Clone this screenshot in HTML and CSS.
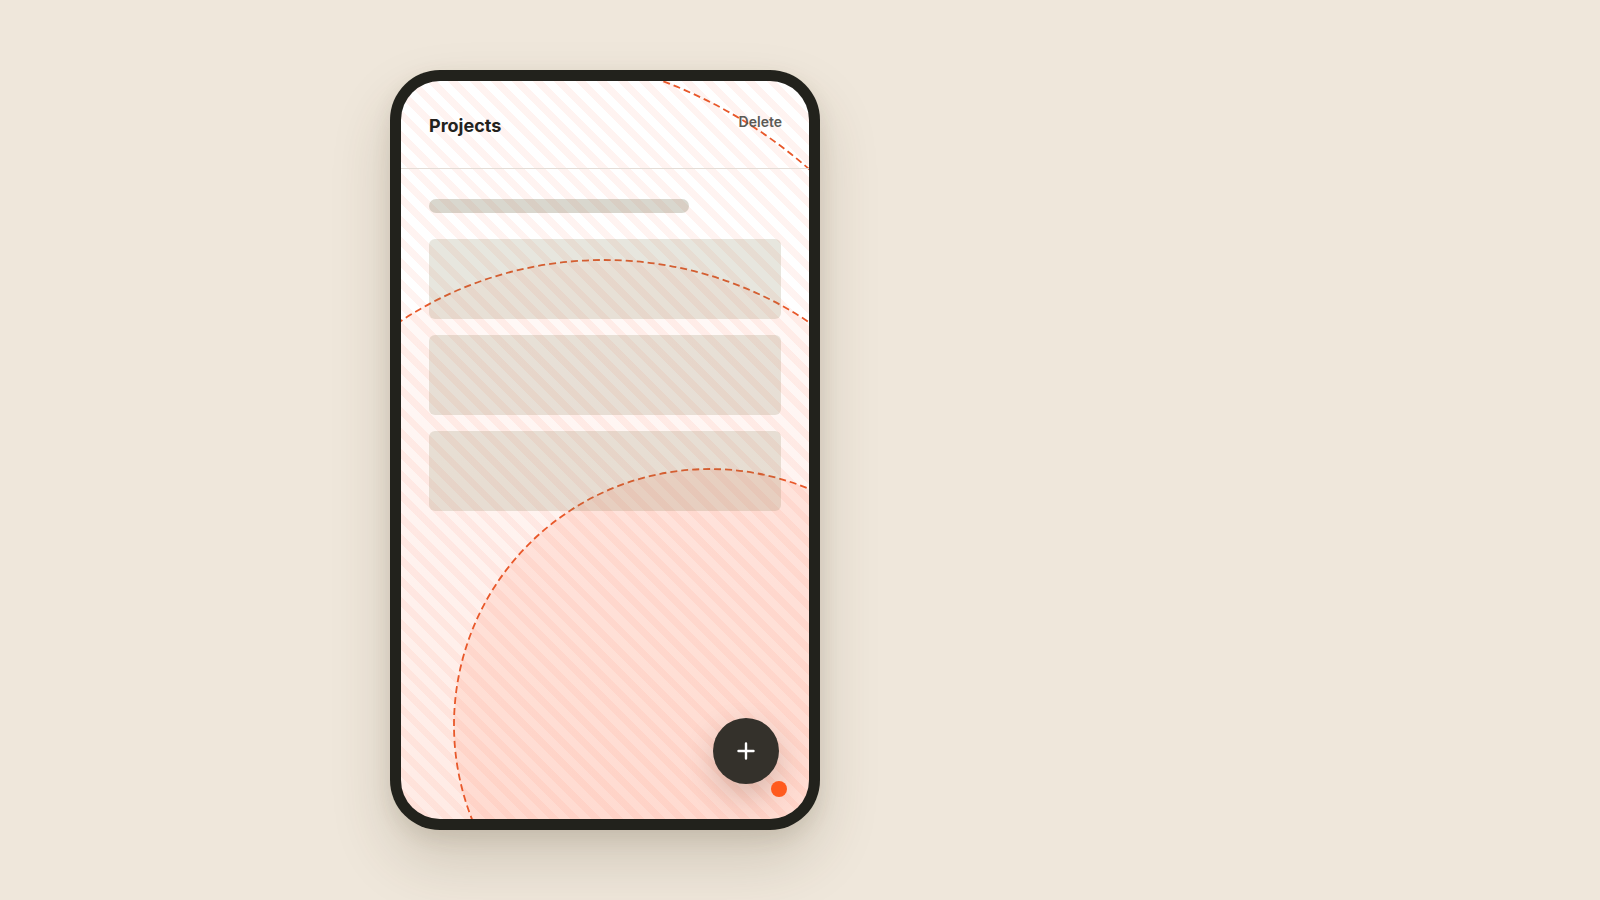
FILE: index.html
```html
<!DOCTYPE html>
<html lang="en">
<head>
<meta charset="utf-8">
<title>Projects</title>
<link rel="stylesheet" href="styles.css">
</head>
<body>
<main class="stage">
  <div class="phone">
    <div class="screen">
      <svg class="rings" width="408" height="738" viewBox="0 0 408 738" aria-hidden="true">
        <circle class="ring ring-outer" cx="92" cy="448" r="479"/>
        <circle class="ring ring-mid" cx="203" cy="548" r="369"/>
        <circle class="ring ring-inner" cx="309" cy="644" r="256"/>
      </svg>
      <header class="topbar">
        <h1 class="title">Projects</h1>
        <button class="delete">Delete</button>
      </header>
      <section class="content">
        <div class="skeleton-line"></div>
        <div class="skeleton-card"></div>
        <div class="skeleton-card"></div>
        <div class="skeleton-card"></div>
      </section>
      <button class="fab" aria-label="Add project">
        <svg width="20" height="20" viewBox="0 0 20 20"><path d="M10 2.5v15M2.5 10h15" stroke="#fff" stroke-width="2.4" stroke-linecap="round"/></svg>
      </button>
      <span class="touch-dot"></span>
    </div>
  </div>
</main>
</body>
</html>
```
FILE: styles.css
```css
* { box-sizing: border-box; }
html, body { margin: 0; padding: 0; }
body {
  background: #efe7db;
  font-family: Inter, "Noto Sans", "Liberation Sans", sans-serif;
  width: 1600px;
  height: 900px;
  overflow: hidden;
}
.stage {
  height: 900px;
  display: flex;
  align-items: center;
  padding-left: 390px;
}
.phone {
  width: 430px;
  height: 760px;
  background: #22221c;
  border-radius: 50px;
  padding: 11px;
  box-shadow: 0 30px 60px rgba(70, 55, 30, 0.18), 0 8px 20px rgba(70, 55, 30, 0.10);
}
.screen {
  position: relative;
  width: 408px;
  height: 738px;
  border-radius: 39px;
  overflow: hidden;
  background:
    repeating-linear-gradient(45deg, rgba(255, 120, 90, 0.085) 0 7px, rgba(255, 120, 90, 0) 7px 15px),
    linear-gradient(180deg, #ffffff 0%, #ffffff 35%, #fff2ee 100%);
  display: flex;
  flex-direction: column;
}
.rings {
  position: absolute;
  left: 0;
  top: 0;
  z-index: 0;
}
.ring {
  stroke: #e8582a;
  stroke-width: 1.8;
  stroke-dasharray: 7 4;
}
.ring-outer { fill: rgba(255, 120, 80, 0); }
.ring-mid { fill: rgba(255, 120, 80, 0.05); }
.ring-inner { fill: rgba(255, 115, 75, 0.13); }
.topbar {
  position: relative;
  z-index: 1;
  height: 88px;
  flex: none;
  border-bottom: 1px solid #e4ddd7;
  display: flex;
  justify-content: space-between;
  align-items: flex-start;
  padding: 32px 27px 0 28px;
}
.title {
  margin: 2px 0 0;
  font-size: 18px;
  line-height: 21px;
  font-weight: 700;
  color: #23221d;
}
.delete {
  margin: 0;
  padding: 0;
  border: 0;
  background: none;
  font-family: inherit;
  font-size: 14px;
  line-height: 17px;
  font-weight: 600;
  color: #5b5a55;
}
.content {
  position: relative;
  z-index: 1;
  padding: 30px 28px 0;
  display: flex;
  flex-direction: column;
  gap: 16px;
}
.skeleton-line {
  width: 260px;
  height: 14px;
  border-radius: 7px;
  background: rgba(120, 110, 80, 0.28);
  margin-bottom: 10px;
}
.skeleton-card {
  height: 80px;
  border-radius: 6px;
  background: rgba(130, 120, 80, 0.19);
}
.fab {
  position: absolute;
  z-index: 2;
  right: 30px;
  bottom: 35px;
  width: 66px;
  height: 66px;
  border-radius: 50%;
  border: 0;
  padding: 0;
  background: #34312b;
  display: flex;
  align-items: center;
  justify-content: center;
  box-shadow: 0 12px 30px rgba(80, 50, 30, 0.22);
}
.touch-dot {
  position: absolute;
  z-index: 3;
  left: 370px;
  top: 700px;
  width: 16px;
  height: 16px;
  border-radius: 50%;
  background: #ff5a1e;
}
```
